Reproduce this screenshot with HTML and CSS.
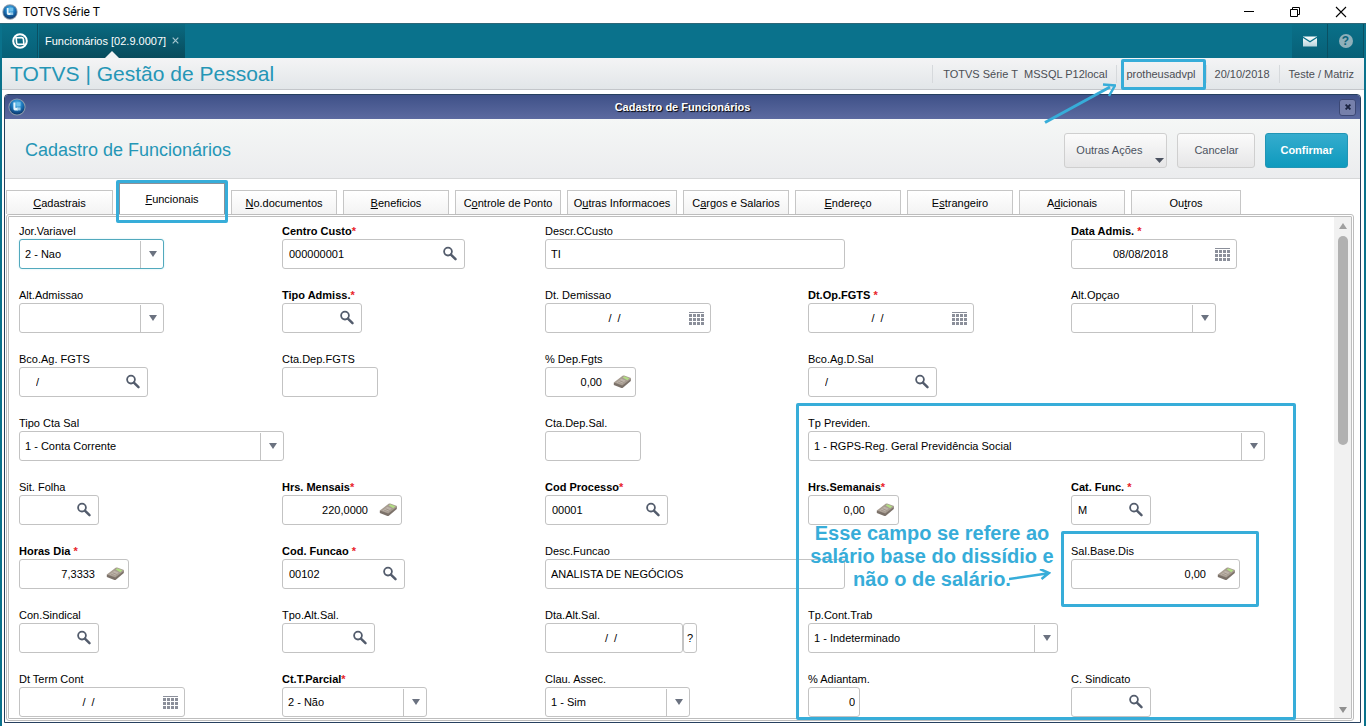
FILE: index.html
```html
<!DOCTYPE html>
<html lang="pt-BR">
<head>
<meta charset="utf-8">
<title>TOTVS Série T</title>
<link rel="stylesheet" href="styles.css">
</head>
<body>
<svg class="sprite" aria-hidden="true">
  <defs>
    <radialGradient id="orb" cx="50%" cy="30%" r="70%"><stop offset="0" stop-color="#5fc0ee"/><stop offset=".5" stop-color="#1c78be"/><stop offset="1" stop-color="#0b3468"/></radialGradient>
    <linearGradient id="envelope" x1="0" y1="0" x2="0" y2="1"><stop offset="0" stop-color="#fff"/><stop offset="1" stop-color="#b9d3dc"/></linearGradient>
  </defs>
  <symbol id="i-orb" viewBox="0 0 18 18"><circle cx="9" cy="9" r="8.6" fill="#8c9cac"/><circle cx="9" cy="9" r="7.6" fill="url(#orb)"/><path d="M5.400 4.400h2v5.400h2.400v2.600H7q-1.600 0-1.600-1.600z" fill="#e4f4fc"/><path d="M8.600 4.200h4v4.200h-4z" fill="#6fbfe9"/><path d="M9 9.400h3.600v3H9z" fill="#b5def3" opacity=".8"/></symbol>
  <symbol id="i-lens" viewBox="0 0 16 16"><circle cx="6" cy="5.6" r="3.9" fill="none" stroke="#535c6c" stroke-width="1.8"/><path d="M8.9 8.6l4.6 4.5" stroke="#535c6c" stroke-width="2.5" stroke-linecap="round"/></symbol>
  <symbol id="i-cal" viewBox="0 0 16 14"><g shape-rendering="crispEdges"><path d="M0 .5h15" stroke="#8b8f9a"/><path d="M0 3.5h15M0 7.5h15M0 11.5h15" stroke="#8b8f9a" stroke-width="3" stroke-dasharray="3 1"/></g></symbol>
  <symbol id="i-calc" viewBox="0 0 19 14"><path d="M.8 7.400v2.600l7.600 3q.8.3 1.500-.3l7.900-6.800V3.700z" fill="#7b7169"/><path d="M.8 7.600L9.600.7q.7-.4 1.600-.2l6.200 2.200q1 .5.400 1.300L9.300 10.600z" fill="#a79c91"/><path d="M9.700 2.600l1.500-1.300 5.200 1.900-2.100 2.100z" fill="#b2dc84"/><path d="M3.300 7.500l4.900-3.700 4.500 1.800-4.200 3.600z" fill="#beb4aa"/><path d="M4.800 7l4 1.600M6.500 5.700l4.200 1.700" stroke="#958a80" stroke-width=".7"/></symbol>
  <symbol id="i-down" viewBox="0 0 8 6"><path d="M0 0h8L4 6z" fill="#6b7280"/></symbol>
</svg>

<header class="titlebar">
  <svg class="titlebar__icon" width="16" height="16"><use href="#i-orb"/></svg>
  <span class="titlebar__text">TOTVS Série T</span>
  <div class="titlebar__controls">
    <button aria-label="Minimizar"><svg width="12" height="12" viewBox="0 0 12 12"><path d="M1 5.5h10" stroke="#000"/></svg></button>
    <button aria-label="Restaurar"><svg width="12" height="12" viewBox="0 0 12 12"><path d="M1.5 3.5h7v7h-7zM3.5 3.5v-2h7v7h-2" fill="none" stroke="#000"/></svg></button>
    <button aria-label="Fechar"><svg width="12" height="12" viewBox="0 0 12 12"><path d="M1 1l10 10M11 1L1 11" stroke="#000" stroke-width="1.1"/></svg></button>
  </div>
</header>

<nav class="appbar">
  <button class="appbar__tile" aria-label="Início"><svg width="16" height="16" viewBox="0 0 16 16"><circle cx="8" cy="8" r="6.8" fill="none" stroke="#fff" stroke-width="2"/><path d="M3.200 4.800l6.400-.2q1.600 0 1.800 1.600l.4 4.400M12.800 11.200l-6.400.2q-1.600 0-1.800-1.600l-.4-4.400" fill="none" stroke="#fff" stroke-width="1.600"/></svg></button>
  <div class="appbar__tab"><a href="#">Funcionários [02.9.0007]</a><button aria-label="Fechar aba"><svg width="7" height="7" viewBox="0 0 7 7"><path d="M.7.7l5.6 5.6M6.3.7L.7 6.3" stroke="#a5c6cf" stroke-width="1.2"/></svg></button></div>
  <div class="appbar__tools">
    <button class="appbar__tile" aria-label="Mensagens"><svg width="14" height="11" viewBox="0 0 14 11"><path d="M0 .5h14v10H0z" fill="url(#envelope)"/><path d="M0 1.2l7 4.6 7-4.6" fill="none" stroke="#0a7089" stroke-width="1.3"/></svg></button>
    <button class="appbar__tile appbar__help" aria-label="Ajuda"><span>?</span></button>
  </div>
</nav>

<div class="frame">
  <div class="status">
    <h1>TOTVS | Gestão de Pessoal</h1>
    <ul>
      <li class="status__env">TOTVS Série T&nbsp; MSSQL P12local</li>
      <li class="status__user">protheusadvpl
        <svg class="status__arrow" width="72" height="42" viewBox="0 0 72 42"><path d="M1 39.5L66 4" fill="none" stroke="#37add9" stroke-width="3"/><path d="M59 1.500l12 1-6 10.500" fill="none" stroke="#37add9" stroke-width="2.500"/></svg>
      </li>
      <li class="status__date">20/10/2018</li>
      <li>Teste / Matriz</li>
    </ul>
  </div>

  <main class="window">
    <div class="window__bar">
      <svg width="18" height="18"><use href="#i-orb"/></svg>
      <span>Cadastro de Funcionários</span>
      <button aria-label="Fechar janela"><svg width="6" height="6" viewBox="0 0 6 6"><path d="M.6.6l4.800 4.800M5.400.6L.6 5.400" stroke="#1b2340" stroke-width="1.900"/></svg></button>
    </div>
    <div class="heading">
      <h2>Cadastro de Funcionários</h2>
      <button class="btn btn--menu">Outras Ações<svg width="9" height="5" viewBox="0 0 9 5"><path d="M0 0h9L4.500 5z" fill="#4b5260"/></svg></button>
      <button class="btn">Cancelar</button>
      <button class="btn btn--primary">Confirmar</button>
    </div>
    <div class="tabs" role="tablist">
      <button role="tab"><u>C</u>adastrais</button>
      <button role="tab" class="is-active" aria-selected="true"><u>F</u>uncionais</button>
      <button role="tab"><u>N</u>o.documentos</button>
      <button role="tab"><u>B</u>eneficios</button>
      <button role="tab">C<u>o</u>ntrole de Ponto</button>
      <button role="tab" class="is-wide">O<u>u</u>tras Informacoes</button>
      <button role="tab">C<u>a</u>rgos e Salarios</button>
      <button role="tab"><u>E</u>ndereço</button>
      <button role="tab">E<u>s</u>trangeiro</button>
      <button role="tab">A<u>d</u>icionais</button>
      <button role="tab" class="is-wide">Ou<u>t</u>ros</button>
    </div>
    <div class="pane">
      <form class="form">
        <div class="field c1 r1"><label for="f1">Jor.Variavel</label><div class="box w-145 is-focus"><select id="f1"><option>2 - Nao</option></select><i class="drop"><svg><use href="#i-down"/></svg></i></div></div>
        <div class="field c2 r1"><label for="f2" class="req">Centro Custo<b>*</b></label><div class="box w-183"><input id="f2" value="000000001"><button type="button" class="lens" aria-label="Buscar"><svg><use href="#i-lens"/></svg></button></div></div>
        <div class="field c3 r1"><label for="f3">Descr.CCusto</label><div class="box w-300 plain"><input id="f3" value="TI"></div></div>
        <div class="field c5 r1"><label for="f4" class="req">Data Admis. <b>*</b></label><div class="box w-166 date"><input id="f4" value="08/08/2018"><button type="button" class="cal" aria-label="Calendário"><svg><use href="#i-cal"/></svg></button></div></div>

        <div class="field c1 r2"><label for="f5">Alt.Admissao</label><div class="box w-145"><select id="f5"><option></option></select><i class="drop"><svg><use href="#i-down"/></svg></i></div></div>
        <div class="field c2 r2"><label for="f6" class="req">Tipo Admiss.<b>*</b></label><div class="box w-80"><input id="f6"><button type="button" class="lens" aria-label="Buscar"><svg><use href="#i-lens"/></svg></button></div></div>
        <div class="field c3 r2"><label for="f7">Dt. Demissao</label><div class="box w-166 date"><input id="f7" value="/  /"><button type="button" class="cal" aria-label="Calendário"><svg><use href="#i-cal"/></svg></button></div></div>
        <div class="field c4 r2"><label for="f8" class="req">Dt.Op.FGTS <b>*</b></label><div class="box w-166 date"><input id="f8" value="/  /"><button type="button" class="cal" aria-label="Calendário"><svg><use href="#i-cal"/></svg></button></div></div>
        <div class="field c5 r2"><label for="f9">Alt.Opçao</label><div class="box w-145"><select id="f9"><option></option></select><i class="drop"><svg><use href="#i-down"/></svg></i></div></div>

        <div class="field c1 r3"><label for="f10">Bco.Ag. FGTS</label><div class="box w-129 bank"><input id="f10" value="/"><button type="button" class="lens" aria-label="Buscar"><svg><use href="#i-lens"/></svg></button></div></div>
        <div class="field c2 r3"><label for="f11">Cta.Dep.FGTS</label><div class="box w-96"><input id="f11"></div></div>
        <div class="field c3 r3"><label for="f12">% Dep.Fgts</label><div class="box w-91 num"><input id="f12" value="0,00"><button type="button" class="calc" aria-label="Calculadora"><svg><use href="#i-calc"/></svg></button></div></div>
        <div class="field c4 r3"><label for="f13">Bco.Ag.D.Sal</label><div class="box w-129 bank"><input id="f13" value="/"><button type="button" class="lens" aria-label="Buscar"><svg><use href="#i-lens"/></svg></button></div></div>

        <div class="field c1 r4"><label for="f14">Tipo Cta Sal</label><div class="box w-265"><select id="f14"><option>1 - Conta Corrente</option></select><i class="drop"><svg><use href="#i-down"/></svg></i></div></div>
        <div class="field c3 r4"><label for="f15">Cta.Dep.Sal.</label><div class="box w-96"><input id="f15"></div></div>
        <div class="field c4 r4"><label for="f16">Tp Previden.</label><div class="box w-457"><select id="f16"><option>1 - RGPS-Reg. Geral Previdência Social</option></select><i class="drop"><svg><use href="#i-down"/></svg></i></div></div>

        <div class="field c1 r5"><label for="f17">Sit. Folha</label><div class="box w-80"><input id="f17"><button type="button" class="lens" aria-label="Buscar"><svg><use href="#i-lens"/></svg></button></div></div>
        <div class="field c2 r5"><label for="f18" class="req">Hrs. Mensais<b>*</b></label><div class="box w-120 num"><input id="f18" value="220,0000"><button type="button" class="calc" aria-label="Calculadora"><svg><use href="#i-calc"/></svg></button></div></div>
        <div class="field c3 r5"><label for="f19" class="req">Cod Processo<b>*</b></label><div class="box w-123"><input id="f19" value="00001"><button type="button" class="lens" aria-label="Buscar"><svg><use href="#i-lens"/></svg></button></div></div>
        <div class="field c4 r5"><label for="f20" class="req">Hrs.Semanais<b>*</b></label><div class="box w-91 num"><input id="f20" value="0,00"><button type="button" class="calc" aria-label="Calculadora"><svg><use href="#i-calc"/></svg></button></div></div>
        <div class="field c5 r5"><label for="f21" class="req">Cat. Func. <b>*</b></label><div class="box w-80"><input id="f21" value="M"><button type="button" class="lens" aria-label="Buscar"><svg><use href="#i-lens"/></svg></button></div></div>

        <div class="field c1 r6"><label for="f22" class="req">Horas Dia <b>*</b></label><div class="box w-110 num"><input id="f22" value="7,3333"><button type="button" class="calc" aria-label="Calculadora"><svg><use href="#i-calc"/></svg></button></div></div>
        <div class="field c2 r6"><label for="f23" class="req">Cod. Funcao <b>*</b></label><div class="box w-123"><input id="f23" value="00102"><button type="button" class="lens" aria-label="Buscar"><svg><use href="#i-lens"/></svg></button></div></div>
        <div class="field c3 r6"><label for="f24">Desc.Funcao</label><div class="box w-300 plain"><input id="f24" value="ANALISTA DE NEGÓCIOS"></div></div>
        <div class="field c5 r6"><label for="f25">Sal.Base.Dis</label><div class="box w-169 num"><input id="f25" value="0,00"><button type="button" class="calc" aria-label="Calculadora"><svg><use href="#i-calc"/></svg></button></div></div>

        <div class="field c1 r7"><label for="f26">Con.Sindical</label><div class="box w-80"><input id="f26"><button type="button" class="lens" aria-label="Buscar"><svg><use href="#i-lens"/></svg></button></div></div>
        <div class="field c2 r7"><label for="f27">Tpo.Alt.Sal.</label><div class="box w-93"><input id="f27"><button type="button" class="lens" aria-label="Buscar"><svg><use href="#i-lens"/></svg></button></div></div>
        <div class="field c3 r7"><label for="f28">Dta.Alt.Sal.</label><div class="pair"><div class="box w-138 date"><input id="f28" value="/  /"></div><button type="button" class="ask">?</button></div></div>
        <div class="field c4 r7"><label for="f29">Tp.Cont.Trab</label><div class="box w-250"><select id="f29"><option>1 - Indeterminado</option></select><i class="drop"><svg><use href="#i-down"/></svg></i></div></div>

        <div class="field c1 r8"><label for="f30">Dt Term Cont</label><div class="box w-166 date"><input id="f30" value="/  /"><button type="button" class="cal" aria-label="Calendário"><svg><use href="#i-cal"/></svg></button></div></div>
        <div class="field c2 r8"><label for="f31" class="req">Ct.T.Parcial<b>*</b></label><div class="box w-145"><select id="f31"><option>2 - Não</option></select><i class="drop"><svg><use href="#i-down"/></svg></i></div></div>
        <div class="field c3 r8"><label for="f32">Clau. Assec.</label><div class="box w-145"><select id="f32"><option>1 - Sim</option></select><i class="drop"><svg><use href="#i-down"/></svg></i></div></div>
        <div class="field c4 r8"><label for="f33">% Adiantam.</label><div class="box w-52 num"><input id="f33" value="0"></div></div>
        <div class="field c5 r8"><label for="f34">C. Sindicato</label><div class="box w-80"><input id="f34"><button type="button" class="lens" aria-label="Buscar"><svg><use href="#i-lens"/></svg></button></div></div>

        <div class="mark mark--group"></div>
        <div class="mark mark--salary"></div>
        <p class="note">Esse campo se refere ao salário base do dissídio e<br>não o de salário.</p>
        <svg class="note-arrow" width="42" height="14" viewBox="0 0 42 14"><path d="M0 10L38 4.500M31 0l9 4-7.500 6" fill="none" stroke="#37add9" stroke-width="2.500"/></svg>
      </form>
      <div class="scroll">
        <svg width="8" height="6" viewBox="0 0 8 6"><path d="M0 6h8L4 0z" fill="#a0a0a0"/></svg>
        <div class="scroll__track"><div class="scroll__thumb"></div></div>
        <svg width="8" height="6" viewBox="0 0 8 6"><path d="M0 0h8L4 6z" fill="#909090"/></svg>
      </div>
    </div>
  </main>
</div>
</body>
</html>
```
FILE: styles.css
```css
* { box-sizing: border-box; }
body {
  margin: 0;
  min-height: 100vh;
  display: flex;
  flex-direction: column;
  background: #0a728c;
  color: #000;
  font: 11px/14px "Liberation Sans", Arial, sans-serif;
}
button, input, select { font: inherit; color: inherit; }
button { margin: 0; padding: 0; border: 0; background: none; }
h1, h2, p, ul { margin: 0; padding: 0; font-weight: normal; }
.sprite { position: absolute; width: 0; height: 0; }

.titlebar { display: flex; align-items: center; height: 23px; padding-left: 2px; background: #fff; }
.titlebar__text { margin-left: 5px; font: 12px/16px Roboto, "Noto Sans", sans-serif; }
.titlebar__controls { display: flex; margin-left: auto; padding-right: 2px; }
.titlebar__controls button { display: grid; place-items: center; width: 46px; height: 20px; }

.appbar { display: flex; height: 35px; padding: 0 2px; border-top: 1px solid #2d6778; }
.appbar__tile { display: grid; place-items: center; width: 36px; background: linear-gradient(#0a7089, #076077); border-right: 1px solid #0a5063; }
.appbar__tab {
  position: relative;
  display: flex;
  align-items: center;
  gap: 6px;
  margin-left: 1px;
  padding: 0 6px;
  background: linear-gradient(#0a6a81, #084b5c);
}
.appbar__tab a { color: #fff; text-decoration: none; }
.appbar__tab button { display: flex; padding-bottom: 2px; }
.appbar__tab::after {
  content: "";
  position: absolute;
  bottom: 0;
  left: 50%;
  margin-left: -7px;
  border: 7px solid transparent;
  border-top-width: 0;
  border-bottom-color: #f1f2f3;
}
.appbar__tools { display: flex; margin-left: auto; }
.appbar__help span { width: 14px; border-radius: 7px; background: #8fb0ba; color: #0a637a; font-weight: bold; font-size: 12px; }

.frame { flex: 1; display: flex; flex-direction: column; margin: 0 2px; padding: 0 3px 3px 2px; background: #fff; }

.status { display: flex; align-items: center; height: 32px; margin: 0 -3px 4px -2px; padding: 0 10px 0 8px; background: linear-gradient(#f4f4f5, #e2e6e9); border-bottom: 1px solid #c3c6ca; }
.status h1 { color: #2596b6; font-size: 21px; line-height: 24px; }
.status ul { display: flex; align-items: center; margin-left: auto; list-style: none; color: #4b4e54; }
.status li { padding: 2px 0 2px 9px; border-left: 1px solid #d6d9dc; white-space: nowrap; }
.status li.status__env { padding: 2px 9px 2px 10px; }
.status li.status__date { padding: 2px 9px 2px 8px; }
.status li.status__user { position: relative; padding: 2px 10px 2px 9px; }
.status__user::after { content: ""; position: absolute; inset: -6px 0 -7px 4px; border: 3px solid #37add9; border-radius: 2px; }
.status__arrow { position: absolute; right: 90px; top: 18px; z-index: 2; }

.window { flex: 1; display: flex; flex-direction: column; border: 1px solid #26405f; border-radius: 4px 4px 0 0; background: #fff; }
.window__bar { display: flex; align-items: center; height: 24px; padding: 0 4px 0 3px; background: linear-gradient(#3f5188, #5c6aa0); color: #fff; font-weight: bold; border-radius: 3px 3px 0 0; }
.window__bar span { flex: 1; text-align: center; text-shadow: 1px 1px 1px #000; }
.window__bar button { display: grid; place-items: center; width: 17px; height: 17px; border: 1px solid #3c4875; border-radius: 3px; background: #7680ab; }

.heading { display: flex; align-items: center; gap: 10px; height: 60px; padding: 3px 12px 0 20px; background: linear-gradient(#f5f7f6, #ebecee); border-bottom: 1px solid #d6d7d8; }
.heading h2 { flex: 1; color: #2596b6; font-size: 18px; line-height: 22px; }
.btn { position: relative; height: 35px; padding: 0 16px; border: 1px solid #cfcfcf; border-radius: 3px; background: linear-gradient(#fbfbfb, #e6e6e7); color: #4b5260; }
.btn--menu { padding: 0 24px 0 11px; }
.btn--menu svg { position: absolute; right: 2px; bottom: 4px; }
.btn--primary { padding: 0 14px; border-color: #2195b5; background: linear-gradient(#35acce, #0e9abd); color: #fff; font-weight: bold; }

.tabs { display: flex; align-items: flex-end; gap: 6px; height: 35px; padding-left: 1px; position: relative; z-index: 1; }
.tabs button { width: 106px; height: 24px; border: 1px solid #c6c6c6; border-bottom: 0; background: linear-gradient(#fff, #f3f3f3); white-space: nowrap; }
.tabs button:first-child { width: 107px; }
.tabs button.is-wide { width: 110px; }
.tabs button.is-active { position: relative; height: 31px; border-color: #8c9098; background: #fff; }
.tabs .is-active::after { content: ""; position: absolute; inset: -4px -4px -9px; border: 3px solid #37add9; border-radius: 2px; }

.pane { flex: 1; display: flex; margin: 0 6px 1px 1px; border: 3px double #bdbdbd; border-radius: 3px; }
.form { position: relative; flex: 1; display: grid; grid-template-columns: repeat(5, minmax(0, 1fr)); grid-template-rows: repeat(8, 45px); row-gap: 19px; padding: 7px 0 0 10px; }
.field { display: flex; flex-direction: column; gap: 1px; min-width: 0; white-space: nowrap; }
.field label { height: 14px; }
.req { font-weight: bold; }
.req b { color: #e8232a; font-weight: bold; }
.c1 { grid-column: 1; } .c2 { grid-column: 2; } .c3 { grid-column: 3; } .c4 { grid-column: 4; } .c5 { grid-column: 5; }
.r1 { grid-row: 1; } .r2 { grid-row: 2; } .r3 { grid-row: 3; } .r4 { grid-row: 4; }
.r5 { grid-row: 5; } .r6 { grid-row: 6; } .r7 { grid-row: 7; } .r8 { grid-row: 8; }

.box { display: flex; height: 30px; border: 1px solid #c3c3c3; border-radius: 3px; background: #fff; }
.box input, .box select { flex: 1; min-width: 0; height: 28px; margin: 0; padding: 0 0 0 6px; border: 0; outline: 0; background: transparent; appearance: none; }
.box select, .plain input { padding-left: 5px; }
.is-focus { border-color: #52a9bd; box-shadow: 0 0 2px #c5ecf2; }
.drop { display: grid; place-items: center; width: 23px; margin-top: 1px; border-left: 1px solid #c3c3c3; padding: 0 0 1px 2px; pointer-events: none; }
.drop svg { width: 8px; height: 6px; }
.box button { display: flex; flex: none; align-items: center; }
.lens { width: 22px; }
.lens svg { width: 16px; height: 16px; }
.cal { width: 21px; padding-top: 2px; }
.cal svg { width: 16px; height: 14px; }
.calc { width: 22px; }
.calc svg { width: 19px; height: 14px; }
.date input { padding: 0 6px 0 0; text-align: center; white-space: pre; }
.num input { padding: 0 11px 0 0; text-align: right; }
.num input:last-child { padding-right: 4px; }
.bank input { padding-left: 16px; }
.pair { display: flex; }
.ask { width: 14px; height: 30px; border: 1px solid #c3c3c3; border-radius: 3px; background: #fff; }

.w-52 { width: 52px; } .w-80 { width: 80px; } .w-91 { width: 91px; } .w-93 { width: 93px; }
.w-96 { width: 96px; } .w-110 { width: 110px; } .w-120 { width: 120px; } .w-123 { width: 123px; }
.w-129 { width: 129px; } .w-138 { width: 138px; } .w-145 { width: 145px; } .w-166 { width: 166px; }
.w-169 { width: 169px; } .w-183 { width: 183px; } .w-250 { width: 250px; } .w-265 { width: 265px; }
.w-300 { width: 300px; } .w-457 { width: 457px; }

.mark { position: absolute; border: 3px solid #37add9; border-radius: 2px; pointer-events: none; }
.mark--group { grid-column: 4 / 6; grid-row: 4 / 9; inset: -13px 38px -3px -12px; }
.mark--salary { grid-column: 5 / 6; grid-row: 6 / 7; inset: -13px 75px -18px -10px; }
.note { position: absolute; grid-column: 4 / 5; grid-row: 5 / 7; top: 42px; left: -6px; width: 260px; color: #37add9; font-size: 20px; font-weight: bold; line-height: 23px; text-align: center; }
.note-arrow { position: absolute; grid-column: 5 / 6; grid-row: 6 / 7; left: -62px; top: 25px; }

.scroll { display: flex; flex-direction: column; align-items: center; gap: 7px; width: 17px; padding: 6px 0 5px; background: #f1f1f1; }
.scroll svg { flex: none; }
.scroll__track { flex: 1; width: 10px; }
.scroll__thumb { height: 45%; border-radius: 5px; background: #b1b1b1; }
```
